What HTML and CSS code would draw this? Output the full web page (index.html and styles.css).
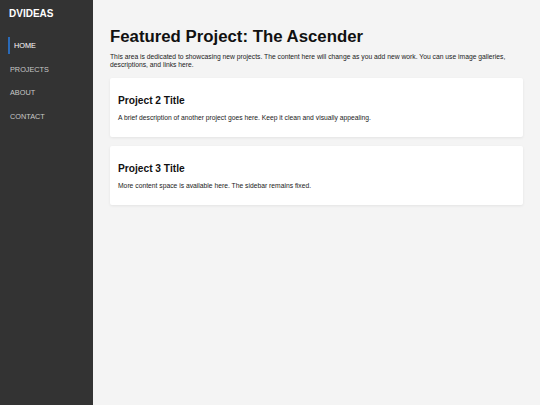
FILE: index.html
```html
<!DOCTYPE html>
<html lang="en">
<head>
<meta charset="utf-8">
<title>DVIDEAS</title>
<link rel="stylesheet" href="styles.css">
</head>
<body>
<div class="layout">
  <aside class="sidebar">
    <div class="logo">DVIDEAS</div>
    <nav class="nav">
      <a class="nav-item active" href="#">HOME</a>
      <a class="nav-item" href="#">PROJECTS</a>
      <a class="nav-item" href="#">ABOUT</a>
      <a class="nav-item" href="#">CONTACT</a>
    </nav>
  </aside>
  <main class="main">
    <h1 class="page-title">Featured Project: The Ascender</h1>
    <p class="intro">This area is dedicated to showcasing new projects. The content here will change as you add new work. You can use image galleries, descriptions, and links here.</p>
    <section class="card">
      <h2 class="card-title">Project 2 Title</h2>
      <p class="card-text">A brief description of another project goes here. Keep it clean and visually appealing.</p>
    </section>
    <section class="card">
      <h2 class="card-title">Project 3 Title</h2>
      <p class="card-text">More content space is available here. The sidebar remains fixed.</p>
    </section>
  </main>
</div>
</body>
</html>
```

FILE: styles.css
```css
* { box-sizing: border-box; }
html, body {
  margin: 0;
  padding: 0;
  height: 100%;
}
body {
  font-family: "Liberation Sans", Arial, sans-serif;
  background: #f4f4f4;
  color: #111;
}
.layout {
  display: flex;
  min-height: 100%;
}
.sidebar {
  width: 93px;
  flex: 0 0 93px;
  background: #333333;
  padding: 8px 0 0 9px;
}
.logo {
  color: #ffffff;
  font-weight: bold;
  font-size: 10px;
  line-height: 12px;
  margin-bottom: 17px;
}
.nav {
  display: flex;
  flex-direction: column;
}
.nav-item {
  display: block;
  color: #c8c8c8;
  text-decoration: none;
  font-size: 7.3px;
  line-height: 17px;
  margin-bottom: 6.5px;
  padding-left: 1px;
}
.nav-item.active {
  color: #ffffff;
  border-left: 2px solid #2a6ab8;
  padding-left: 4px;
  margin-left: -1px;
}
.main {
  flex: 1;
  padding: 26px 17px 20px 17px;
}
.page-title {
  margin: 0;
  font-size: 16.8px;
  line-height: 22px;
  font-weight: bold;
  color: #111;
}
.intro {
  margin: 5px 0 9px;
  font-size: 6.75px;
  line-height: 8px;
  color: #1a1a1a;
}
.card {
  background: #ffffff;
  border-radius: 2px;
  box-shadow: 0 1px 3px rgba(0,0,0,0.07);
  padding: 17px 8px 15px;
  margin-bottom: 9px;
}
.card-title {
  margin: 0 0 7px;
  font-size: 10.2px;
  line-height: 12px;
  font-weight: bold;
  color: #111;
}
.card-text {
  margin: 0;
  font-size: 6.75px;
  line-height: 8px;
  color: #1a1a1a;
}
```
